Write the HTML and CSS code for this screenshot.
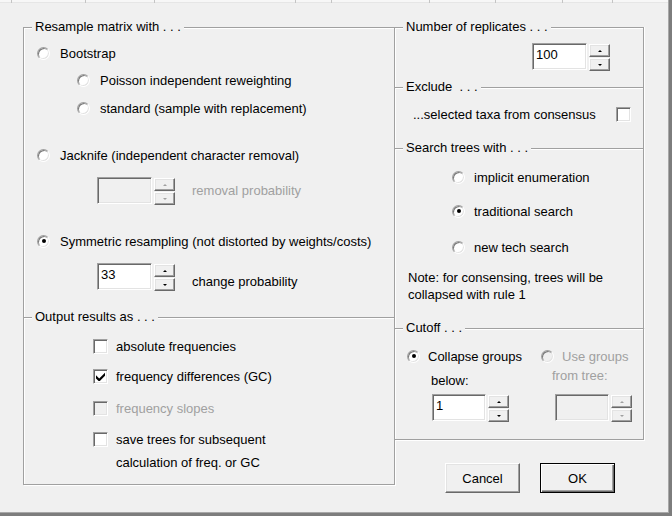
FILE: index.html
```html
<!DOCTYPE html>
<html>
<head>
<meta charset="utf-8">
<link rel="stylesheet" href="styles.css">
</head>
<body>
<div class="dialog">
  <div class="strip">
    <span class="tick" style="width:12px"></span><span class="tick" style="width:74px"></span><span class="tick" style="width:69px"></span><span class="tick" style="width:141px"></span><span class="tick" style="width:36px"></span><span class="tick" style="width:98px"></span><span class="tick" style="width:66px"></span><span class="tick" style="width:67px"></span><span class="tick" style="width:50px"></span>
  </div>
  <div class="cols">
    <div class="left">
      <div class="frame f-resample">
        <span class="legend">Resample matrix with . . .</span>
        <div class="row pl13 mt15"><span class="radio"></span><span>Bootstrap</span></div>
        <div class="row pl53 mt7"><span class="radio"></span><span>Poisson independent reweighting</span></div>
        <div class="row pl53 mt8"><span class="radio"></span><span>standard (sample with replacement)</span></div>
        <div class="row pl13 mt27"><span class="radio"></span><span>Jacknife (independent character removal)</span></div>
        <div class="spinrow pl73 mt12">
          <div class="spin disabled"><span class="edit"></span><span class="btns"><span class="sb up"></span><span class="sb down"></span></span></div>
          <span class="spinlabel dis">removal probability</span>
        </div>
        <div class="row pl13 mt27"><span class="radio on"></span><span>Symmetric resampling (not distorted by weights/costs)</span></div>
        <div class="spinrow pl73 mt12">
          <div class="spin"><span class="edit">33</span><span class="btns"><span class="sb up"></span><span class="sb down"></span></span></div>
          <span class="spinlabel low">change probability</span>
        </div>
      </div>
      <div class="frame f-output closed">
        <span class="legend">Output results as . . .</span>
        <div class="row cbrow mt18"><span class="check"></span><span>absolute frequencies</span></div>
        <div class="row cbrow mt10"><span class="check"><svg class="tick-mark" viewBox="0 0 7 7" width="9" height="9"><path d="M0 2.5 L2.5 5 L7 0.5 L7 3 L2.5 7.5 L0 5 Z" fill="#000"/></svg></span><span>frequency differences (GC)</span></div>
        <div class="row cbrow mt12 dis"><span class="check disabled"></span><span>frequency slopes</span></div>
        <div class="row cbrow mt11"><span class="check"></span><span>save trees for subsequent</span></div>
        <div class="row cont mt3"><span>calculation of freq. or GC</span></div>
      </div>
    </div>
    <div class="right">
      <div class="frame f-number">
        <span class="legend">Number of replicates . . .</span>
        <div class="spinrow pl137 mt15">
          <div class="spin"><span class="edit">100</span><span class="btns"><span class="sb up"></span><span class="sb down"></span></span></div>
        </div>
      </div>
      <div class="frame f-exclude">
        <span class="legend">Exclude&nbsp; . . .</span>
        <div class="row excl mt16"><span>...selected taxa from consensus</span><span class="check push"></span></div>
      </div>
      <div class="frame f-search">
        <span class="legend">Search trees with . . .</span>
        <div class="row pl57 gap9 mt18"><span class="radio"></span><span>implicit enumeration</span></div>
        <div class="row pl57 gap9 mt14"><span class="radio on"></span><span>traditional search</span></div>
        <div class="row pl57 gap9 mt16"><span class="radio"></span><span>new tech search</span></div>
        <p class="note">Note: for consensing, trees will be<br>collapsed with rule 1</p>
      </div>
      <div class="frame f-cutoff closed">
        <span class="legend">Cutoff . . .</span>
        <div class="cutcols">
          <div class="cut-left">
            <div class="row gap8 mt17"><span class="radio on"></span><span>Collapse groups</span></div>
            <div class="sub below">below:</div>
            <div class="spinrow sp-left">
              <div class="spin"><span class="edit">1</span><span class="btns"><span class="sb up"></span><span class="sb down"></span></span></div>
            </div>
          </div>
          <div class="cut-right dis">
            <div class="row gap8 mt17"><span class="radio disabled"></span><span>Use groups</span></div>
            <div class="sub fromtree">from tree:</div>
            <div class="spinrow sp-right">
              <div class="spin disabled"><span class="edit"></span><span class="btns"><span class="sb up"></span><span class="sb down"></span></span></div>
            </div>
          </div>
        </div>
      </div>
      <div class="buttons">
        <span class="button">Cancel</span>
        <span class="button default">OK</span>
      </div>
    </div>
  </div>
</div>
</body>
</html>
```
FILE: styles.css
```css
* { box-sizing: border-box; }
html, body { margin: 0; padding: 0; }
body {
  width: 672px;
  height: 516px;
  overflow: hidden;
  background: #7d7d7d;
  font-family: "Liberation Sans", Arial, sans-serif;
  font-size: 13px;
  color: #000;
}
.dialog {
  width: 669px;
  height: 513px;
  background: #f0f0f0;
  border-right: 1px solid #a8a8a8;
  border-bottom: 1px solid #a8a8a8;
}
.strip {
  height: 3px;
  display: flex;
  background: #f7f7f7;
  border-bottom: 1px solid #e6e6e6;
}
.tick { height: 3px; border-right: 1px solid #c4c4c4; flex: none; }
.cols {
  display: flex;
  align-items: flex-start;
  padding: 24px 0 0 23px;
}
.left { width: 372px; flex: none; }
.right { width: 250px; margin-left: -1px; flex: none; }

.frame {
  position: relative;
  border: 1px solid #a0a0a0;
  border-bottom: none;
  box-shadow: inset 1px 1px 0 #fff, 1px 0 0 #fff;
}
.frame.closed {
  border-bottom: 1px solid #a0a0a0;
  box-shadow: inset 1px 1px 0 #fff, 1px 1px 0 #fff;
}
.legend {
  position: absolute;
  top: -9px;
  left: 8px;
  padding: 0 3px;
  background: #f0f0f0;
  line-height: 15px;
  white-space: nowrap;
}
.f-resample { height: 290px; }
.f-output { height: 168px; }
.f-number { height: 60px; }
.f-exclude { height: 61px; }
.f-search { height: 180px; }
.f-cutoff { height: 112px; }

.row {
  display: flex;
  align-items: center;
  gap: 10px;
  height: 20px;
  white-space: nowrap;
}
.gap9 { gap: 9px; }
.gap8 { gap: 8px; }
.pl13 { padding-left: 13px; }
.pl53 { padding-left: 53px; }
.pl57 { padding-left: 57px; }
.pl73 { padding-left: 73px; }
.pl137 { padding-left: 137px; }
.mt3 { margin-top: 3px; }
.mt7 { margin-top: 7px; }
.mt8 { margin-top: 8px; }
.mt10 { margin-top: 10px; }
.mt11 { margin-top: 11px; }
.mt12 { margin-top: 12px; }
.mt14 { margin-top: 14px; }
.mt15 { margin-top: 15px; }
.mt16 { margin-top: 16px; }
.mt17 { margin-top: 17px; }
.mt18 { margin-top: 18px; }
.mt27 { margin-top: 27px; }

.dis { color: #a0a0a0; }

/* radio */
.radio {
  position: relative;
  flex: none;
  width: 13px;
  height: 13px;
  border-radius: 50%;
  border: 1px solid;
  border-color: #a0a0a0 #fff #fff #a0a0a0;
  background: #fff;
  box-shadow: inset 1px 1px 0 #7a7a7a, inset -1px -1px 0 #e3e3e3;
}
.radio.disabled { background: #f0f0f0; }
.radio.on::after {
  content: "";
  position: absolute;
  left: 3.5px;
  top: 3.5px;
  width: 4px;
  height: 4px;
  border-radius: 50%;
  background: #000;
}

/* checkbox */
.check {
  flex: none;
  width: 15px;
  height: 15px;
  border: 1px solid;
  border-color: #a0a0a0 #fff #fff #a0a0a0;
  background: #fff;
  box-shadow: inset 1px 1px 0 #696969, inset -1px -1px 0 #e3e3e3;
  display: flex;
  align-items: center;
  justify-content: center;
}
.check.disabled { background: #f0f0f0; }
.tick-mark { display: block; }
.cbrow { padding-left: 69px; gap: 8px; }
.cont { padding-left: 92px; }

/* spin */
.spinrow { display: flex; align-items: flex-start; height: 27px; }
.spin { display: flex; gap: 2px; flex: none; }
.edit {
  width: 55px;
  height: 27px;
  border: 1px solid;
  border-color: #a0a0a0 #fff #fff #a0a0a0;
  box-shadow: inset 1px 1px 0 #696969, inset -1px -1px 0 #e3e3e3;
  background: #fff;
  padding: 2px 3px 0;
  line-height: 17px;
}
.spin.disabled .edit { background: #f0f0f0; }
.btns { display: flex; flex-direction: column; gap: 1px; padding-top: 1px; }
.sb {
  width: 21px;
  height: 13px;
  border: 1px solid;
  border-color: #fff #696969 #696969 #fff;
  box-shadow: inset -1px -1px 0 #a0a0a0, inset 1px 1px 0 #e3e3e3;
  background: #f0f0f0;
  display: flex;
  align-items: center;
  justify-content: center;
}
.sb::before {
  content: "";
  width: 0;
  height: 0;
  border-left: 2px solid transparent;
  border-right: 2px solid transparent;
}
.sb.up::before { border-bottom: 2px solid #000; }
.sb.down::before { border-top: 2px solid #000; }
.spin.disabled .sb.up::before { border-bottom-color: #a0a0a0; }
.spin.disabled .sb.down::before { border-top-color: #a0a0a0; }
.spinlabel { margin-left: 17px; line-height: 15px; padding-top: 6px; white-space: nowrap; }
.spinlabel.low { padding-top: 11px; }

/* exclude */
.excl { padding-left: 18px; padding-right: 12px; gap: 0; }
.push { margin-left: auto; }

/* note */
.note {
  margin: 12px 0 0;
  padding-left: 13px;
  line-height: 17px;
}

/* cutoff */
.cutcols { display: flex; }
.cut-left { width: 146px; padding-left: 12px; flex: none; }
.cut-right { flex: 1; }
.sub { line-height: 16px; height: 16px; }
.below { margin-top: 7px; padding-left: 24px; }
.fromtree { margin-top: 2px; padding-left: 11px; }
.sp-left { margin-top: 5px; padding-left: 25px; }
.sp-left .edit { width: 54px; }
.sp-right { margin-top: 10px; padding-left: 14px; }
.sp-right .edit { width: 54px; }

/* buttons */
.buttons {
  display: flex;
  gap: 20px;
  padding-left: 51px;
  margin-top: 23px;
}
.button {
  width: 75px;
  height: 30px;
  display: flex;
  align-items: center;
  justify-content: center;
  border: 1px solid;
  border-color: #fff #696969 #696969 #fff;
  box-shadow: inset -1px -1px 0 #a0a0a0, inset 1px 1px 0 #e3e3e3;
  background: #f0f0f0;
}
.button.default {
  border: 1px solid #000;
  box-shadow: inset 1px 1px 0 #fff, inset -1px -1px 0 #696969, inset -2px -2px 0 #a0a0a0;
}
```
